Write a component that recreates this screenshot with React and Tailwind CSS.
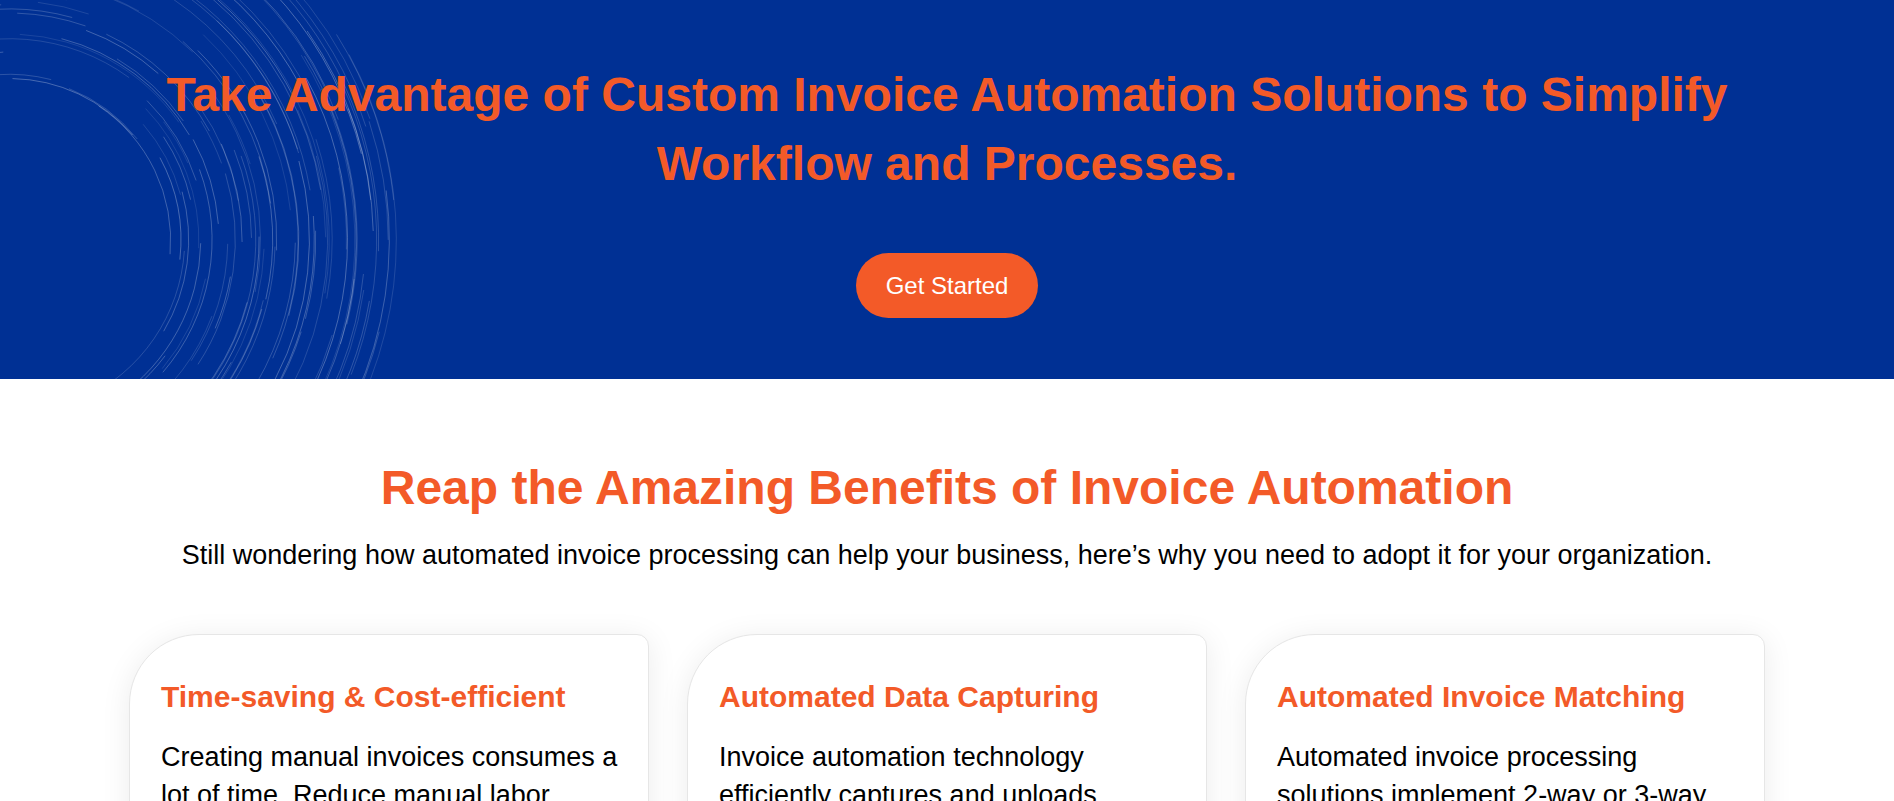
import React from "react";

// ─────────────────────────────────────────────────────────────────────────────
// Decorative speed-line rings in the hero's top-left corner
// ─────────────────────────────────────────────────────────────────────────────
let seed = 11;
const rnd = () => {
  seed = (seed * 9301 + 49297) % 233280;
  return seed / 233280;
};

const CX = 10;
const CY = 240;
const ARCS = Array.from({ length: 120 }, () => {
  const band = rnd();
  const r = band < 0.55 ? 160 + rnd() * 110 : 280 + rnd() * 110;
  const a1 = (-125 + rnd() * 165) * (Math.PI / 180);
  const sweep = (10 + rnd() * 55) * (Math.PI / 180);
  const a2 = a1 + sweep;
  const x1 = CX + r * Math.cos(a1);
  const y1 = CY + r * Math.sin(a1);
  const x2 = CX + r * Math.cos(a2);
  const y2 = CY + r * Math.sin(a2);
  return {
    d: `M${x1.toFixed(1)} ${y1.toFixed(1)} A${r.toFixed(1)} ${r.toFixed(1)} 0 0 1 ${x2.toFixed(1)} ${y2.toFixed(1)}`,
    o: 0.1 + rnd() * 0.18,
  };
});

function Rings() {
  return (
    <svg
      className="pointer-events-none absolute left-0 top-0"
      width="430"
      height="379"
      viewBox="0 0 430 379"
      fill="none"
    >
      {ARCS.map((a, i) => (
        <path key={i} d={a.d} stroke="#ffffff" strokeOpacity={a.o} strokeWidth="1" strokeLinecap="round" />
      ))}
    </svg>
  );
}

const CARDS = [
  {
    title: "Time-saving & Cost-efficient",
    body: "Creating manual invoices consumes a lot of time. Reduce manual labor. Automating the process cuts costs and gets your invoices approved faster.",
  },
  {
    title: "Automated Data Capturing",
    body: "Invoice automation technology efficiently captures and uploads invoice data into your system without errors or duplicate entries.",
  },
  {
    title: "Automated Invoice Matching",
    body: "Automated invoice processing solutions implement 2-way or 3-way matching of invoices with purchase orders and receipts.",
  },
];

export default function App() {
  return (
    <div className="min-h-screen bg-white font-['Liberation_Sans',Arial,sans-serif]">
      {/* hero */}
      <section className="relative h-[379px] overflow-hidden bg-[#003094]">
        <Rings />
        <div className="relative mx-auto flex max-w-[1600px] flex-col items-center pt-[60px] text-center">
          <h1 className="text-[48px] font-bold leading-[69px] text-[#f35a28]">
            Take Advantage of Custom Invoice Automation Solutions to Simplify Workflow and Processes.
          </h1>
          <button className="mt-[55px] h-[65px] rounded-full bg-[#f35a28] px-[30px] text-[24px] text-white">
            Get Started
          </button>
        </div>
      </section>

      {/* benefits */}
      <section className="flex flex-col items-center pt-[80px] pb-16">
        <h2 className="text-[48px] font-bold leading-[58px] text-[#f35a28]">
          Reap the Amazing Benefits of Invoice Automation
        </h2>
        <p className="mt-[18px] text-[27px] leading-[40px] text-black">
          Still wondering how automated invoice processing can help your business, here’s why you need to adopt it for your organization.
        </p>

        <div className="mt-[59px] grid w-[1636px] grid-cols-3 gap-[38px]">
          {CARDS.map((c) => (
            <div
              key={c.title}
              className="rounded-[12px] rounded-tl-[70px] border border-[#e6e6e6] bg-white pt-[44px] pb-[44px] pl-[31px] pr-[25px] shadow-[0_4px_30px_rgba(0,0,0,0.08)]"
            >
              <h3 className="text-[30px] font-bold leading-[36px] text-[#f35a28]">{c.title}</h3>
              <p className="mt-[23px] text-[27px] leading-[38px] text-black">{c.body}</p>
            </div>
          ))}
        </div>
      </section>
    </div>
  );
}
